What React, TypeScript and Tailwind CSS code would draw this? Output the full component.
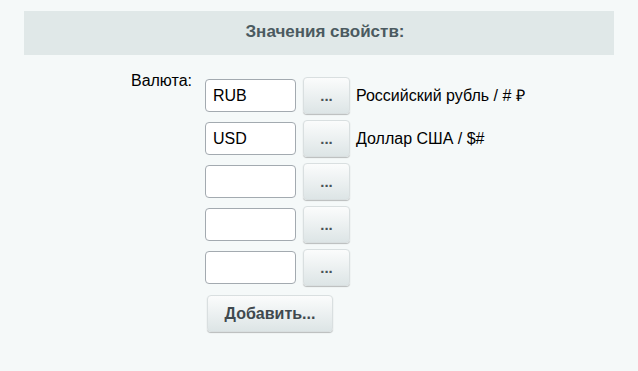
import React from "react";

const rows = [
  { code: "RUB", name: "Российский рубль / # ₽" },
  { code: "USD", name: "Доллар США / $#" },
  { code: "", name: "" },
  { code: "", name: "" },
  { code: "", name: "" },
];

function DotsButton() {
  return (
    <button
      type="button"
      className="w-[47px] h-[37px] shrink-0 rounded-[4px] border border-[#d9dfe0] bg-gradient-to-b from-[#fbfcfc] to-[#dde5e6] shadow-[0_1px_1px_rgba(0,0,0,0.25)] text-[#4a5257] text-[15px] font-bold leading-none"
    >
      ...
    </button>
  );
}

export default function App() {
  return (
    <div
      className="w-[638px] h-[371px] bg-[#f5f9f9] overflow-hidden pt-[11px]"
      style={{ fontFamily: '"Liberation Sans", Arial, sans-serif' }}
    >
      <div className="mx-[24px] h-[44px] bg-[#e0e8e8] flex items-center justify-center pb-[3px] pl-[12px]">
        <span className="text-[17px] font-bold text-[#4b5a60]">
          Значения свойств:
        </span>
      </div>

      <div className="flex mt-[17px]">
        <div className="w-[192px] text-right text-[16px] leading-[18px] text-black">
          Валюта:
        </div>
        <div className="ml-[13px] pt-[5px] flex flex-col gap-[6px]">
          {rows.map((r, i) => (
            <div key={i} className="flex items-center h-[37px]">
              <input
                type="text"
                defaultValue={r.code}
                className="w-[91px] h-[33px] rounded-[4px] border border-[#a3aab0] bg-white px-[7px] text-[16px] text-black outline-none"
              />
              <div className="ml-[7px]">
                <DotsButton />
              </div>
              {r.name && (
                <span className="ml-[6px] text-[16px] text-black whitespace-nowrap">
                  {r.name}
                </span>
              )}
            </div>
          ))}
          <div className="mt-[3px] ml-[2px]">
            <button
              type="button"
              className="w-[126px] h-[37px] rounded-[4px] border border-[#d9dfe0] bg-gradient-to-b from-[#fbfcfc] to-[#dde5e6] shadow-[0_1px_1px_rgba(0,0,0,0.25)] text-[#40494e] text-[16px] font-bold"
            >
              Добавить...
            </button>
          </div>
        </div>
      </div>
    </div>
  );
}
